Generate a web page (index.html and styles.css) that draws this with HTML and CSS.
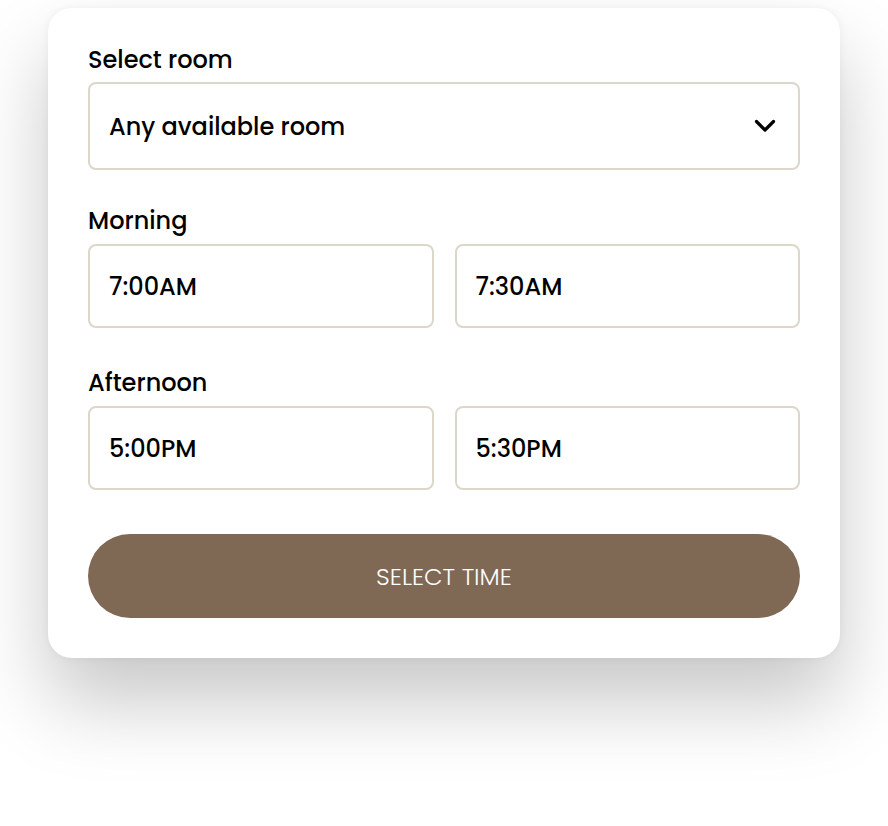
FILE: index.html
```html
<!DOCTYPE html>
<html lang="en">
<head>
    <meta charset="UTF-8">
    <meta name="viewport" content="width=device-width, initial-scale=1.0">
    <title>Select time</title>
    <link rel="stylesheet" href="styles.css">
</head>
<body>
    <div class="card">
        <div class="field">
            <label class="label">Select room</label>
            <div class="select">
                <span>Any available room</span>
                <svg class="chevron" width="22" height="14" viewBox="0 0 22 14">
                    <path d="M2.5 2.5 L11 11 L19.5 2.5" fill="none" stroke="#000" stroke-width="3.2" stroke-linecap="round" stroke-linejoin="round"/>
                </svg>
            </div>
        </div>

        <div class="field morning">
            <label class="label">Morning</label>
            <div class="slots">
                <button class="slot">7:00AM</button>
                <button class="slot">7:30AM</button>
            </div>
        </div>

        <div class="field afternoon">
            <label class="label">Afternoon</label>
            <div class="slots">
                <button class="slot">5:00PM</button>
                <button class="slot">5:30PM</button>
            </div>
        </div>

        <button class="submit">SELECT TIME</button>
    </div>
</body>
</html>
```

FILE: styles.css
```css
body {
    margin: 0;
    padding: 8px 48px 0;
    min-height: 100vh;
    box-sizing: border-box;
    background: #fff;
    font-family: "Poppins", "Open Sans", "Liberation Sans", sans-serif;
    color: #000;
}
.card {
    width: 792px;
    box-sizing: border-box;
    background: #fff;
    border-radius: 24px;
    padding: 37px 40px 40px;
    box-shadow: 0 44px 80px rgba(0, 0, 0, 0.22), 0 0 8px rgba(0, 0, 0, 0.05);
}
.label {
    display: block;
    font-size: 24px;
    line-height: 30px;
    font-weight: 500;
    margin-bottom: 7px;
}
.select {
    height: 88px;
    box-sizing: border-box;
    border: 2px solid #dcd7ca;
    border-radius: 8px;
    display: flex;
    align-items: center;
    justify-content: space-between;
    padding: 0 22px 0 19px;
    font-size: 24px;
    font-weight: 500;
}
.chevron {
    display: block;
}
.morning {
    margin-top: 36px;
}
.afternoon {
    margin-top: 40px;
}
.morning .label,
.afternoon .label {
    margin-bottom: 8px;
}
.slots {
    display: grid;
    grid-template-columns: 1fr 1fr;
    gap: 21px;
}
.slot {
    height: 84px;
    box-sizing: border-box;
    border: 2px solid #dcd7ca;
    border-radius: 8px;
    background: #fff;
    text-align: left;
    padding: 0 19px;
    font-family: inherit;
    font-size: 24px;
    font-weight: 500;
    color: #000;
}
.submit {
    display: block;
    width: 100%;
    height: 84px;
    margin-top: 44px;
    border: none;
    border-radius: 42px;
    background: #7f6854;
    color: #fff;
    font-family: inherit;
    font-size: 24px;
    font-weight: 300;
}
```
